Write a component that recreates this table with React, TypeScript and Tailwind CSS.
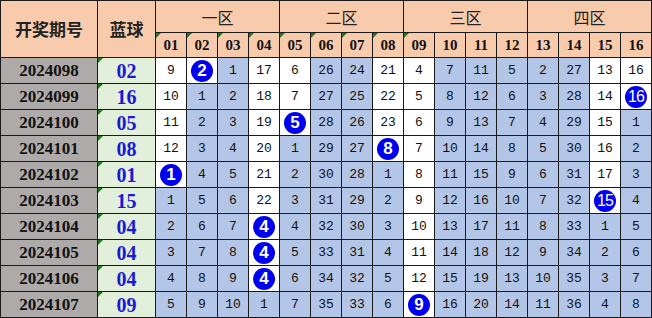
const rows = [
  { id: '2024098', blue: '02', v: [9, 2, 1, 17, 6, 26, 24, 21, 4, 7, 11, 5, 2, 27, 13, 16] },
  { id: '2024099', blue: '16', v: [10, 1, 2, 18, 7, 27, 25, 22, 5, 8, 12, 6, 3, 28, 14, 16] },
  { id: '2024100', blue: '05', v: [11, 2, 3, 19, 5, 28, 26, 23, 6, 9, 13, 7, 4, 29, 15, 1] },
  { id: '2024101', blue: '08', v: [12, 3, 4, 20, 1, 29, 27, 8, 7, 10, 14, 8, 5, 30, 16, 2] },
  { id: '2024102', blue: '01', v: [1, 4, 5, 21, 2, 30, 28, 1, 8, 11, 15, 9, 6, 31, 17, 3] },
  { id: '2024103', blue: '15', v: [1, 5, 6, 22, 3, 31, 29, 2, 9, 12, 16, 10, 7, 32, 15, 4] },
  { id: '2024104', blue: '04', v: [2, 6, 7, 4, 4, 32, 30, 3, 10, 13, 17, 11, 8, 33, 1, 5] },
  { id: '2024105', blue: '04', v: [3, 7, 8, 4, 5, 33, 31, 4, 11, 14, 18, 12, 9, 34, 2, 6] },
  { id: '2024106', blue: '04', v: [4, 8, 9, 4, 6, 34, 32, 5, 12, 15, 19, 13, 10, 35, 3, 7] },
  { id: '2024107', blue: '09', v: [5, 9, 10, 1, 7, 35, 33, 6, 9, 16, 20, 14, 11, 36, 4, 8] },
];

const zones = ['一区', '二区', '三区', '四区'];
const cols = Array.from({ length: 16 }, (_, i) => String(i + 1).padStart(2, '0'));

const cjk = "font-['Noto_Sans_CJK_SC',sans-serif]";
const serif = "font-['Liberation_Serif',serif]";
const mono = "font-['Liberation_Mono',monospace]";

const Tri = () => (
  <span className="absolute left-0 top-0 w-0 h-0 border-t-[5px] border-r-[5px] border-t-[#1f7a1f] border-r-transparent" />
);

const Ball = ({ n }: { n: number }) => (
  <span
    className={`flex items-center justify-center w-[22px] h-[22px] rounded-full bg-[#0000f0] text-white font-bold leading-none ${
      n > 9
        ? "font-['Liberation_Sans_Narrow','Liberation_Sans',sans-serif] text-[16px] tracking-[-1px] font-normal"
        : "font-['Liberation_Sans',sans-serif] text-[17px]"
    }`}
  >
    {n}
  </span>
);

export default function App() {
  const ballCol = rows.map((r) => parseInt(r.blue, 10) - 1);
  const isWhite = (ri: number, c: number) => ballCol.slice(ri).includes(c);

  return (
    <div className="w-[652px] h-[318px] bg-white">
      <div className="grid grid-cols-[96px_57px_repeat(16,30px)] grid-rows-[31px_24px_repeat(10,25px)] gap-px p-px bg-[#1a1a1a] w-[652px]">
        <div className={`row-span-2 bg-[#f8cbad] flex items-center justify-center text-[17px] font-bold text-[#222] ${cjk}`}>
          开奖期号
        </div>
        <div className={`row-span-2 bg-[#f8cbad] flex items-center justify-center text-[17px] font-bold text-[#222] ${cjk}`}>
          蓝球
        </div>
        {zones.map((z) => (
          <div key={z} className={`col-span-4 bg-[#f8cbad] flex items-center justify-center text-[16px] text-[#222] ${cjk}`}>
            {z}
          </div>
        ))}
        {cols.map((c, i) => (
          <div key={c} className={`relative bg-[#f8cbad] flex items-center justify-center text-[15px] font-bold text-[#111] ${serif}`}>
            {i < 9 && <Tri />}
            {c}
          </div>
        ))}
        {rows.map((r, ri) => (
          <div key={r.id} className="contents">
            <div className={`bg-[#aeaaaa] flex items-center justify-center text-[17px] font-bold text-[#111] ${serif}`}>
              {r.id}
            </div>
            <div className={`relative bg-[#e2efda] flex items-center justify-center text-[20px] font-bold text-[#1a1ad6] ${serif}`}>
              <Tri />
              {r.blue}
            </div>
            {r.v.map((n, c) => (
              <div
                key={c}
                className={`flex items-center justify-center text-[13px] text-[#111] ${mono} ${
                  isWhite(ri, c) ? 'bg-white' : 'bg-[#b4c6e7]'
                }`}
              >
                {ballCol[ri] === c ? <Ball n={n} /> : n}
              </div>
            ))}
          </div>
        ))}
      </div>
    </div>
  );
}
